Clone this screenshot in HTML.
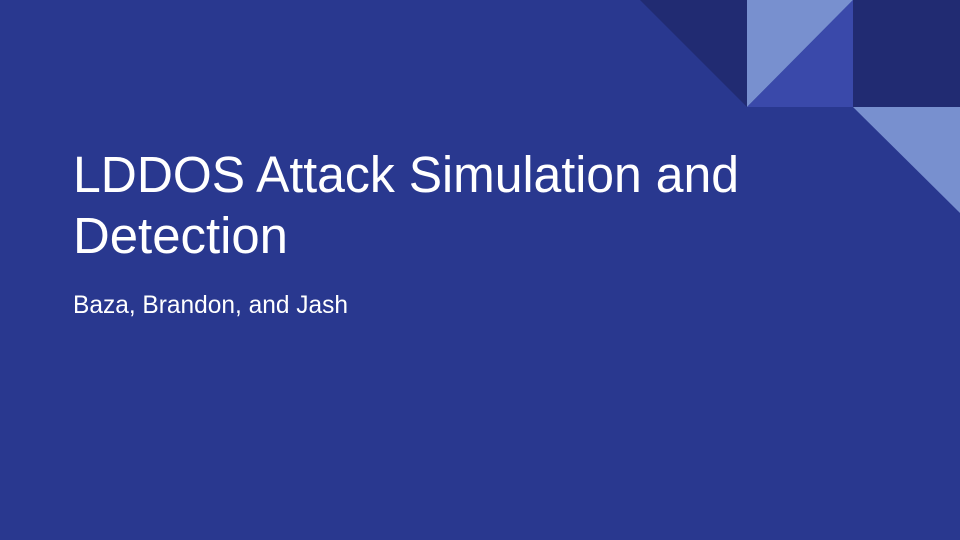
<!DOCTYPE html>
<html><head><meta charset="utf-8"><style>
html,body{margin:0;padding:0;width:960px;height:540px;overflow:hidden;background:#29388f}
</style></head><body>
<svg width="960" height="540" viewBox="0 0 960 540" xmlns="http://www.w3.org/2000/svg">
<rect width="960" height="540" fill="#29388f"/>
<polygon points="640,0 747,0 747,107" fill="#212b72"/>
<polygon points="747,0 853,0 747,107" fill="#7890cf"/>
<polygon points="853,0 853,107 747,107" fill="#3a49aa"/>
<rect x="853" y="0" width="107" height="107" fill="#212b72"/>
<polygon points="853,107 960,107 960,213" fill="#7890cf"/>
<g font-family="Liberation Sans, sans-serif" fill="#ffffff">
<text x="73" y="192" font-size="51" textLength="666" lengthAdjust="spacingAndGlyphs">LDDOS Attack Simulation and</text>
<text x="73" y="253" font-size="51" textLength="215" lengthAdjust="spacingAndGlyphs">Detection</text>
<text x="73" y="313" font-size="25" textLength="275" lengthAdjust="spacingAndGlyphs">Baza, Brandon, and Jash</text>
</g>
</svg>
</body></html>
